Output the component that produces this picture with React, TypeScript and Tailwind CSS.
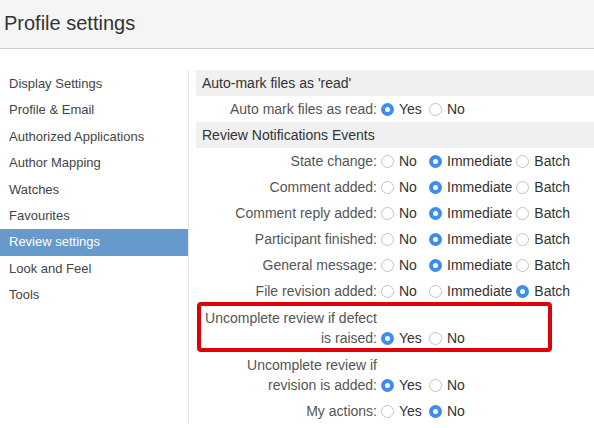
import React from "react";

const font = { fontFamily: '"Liberation Sans", Arial, Helvetica, sans-serif' };

function Radio({ checked }: { checked: boolean }) {
  return checked ? (
    <span className="flex h-[13px] w-[13px] shrink-0 items-center justify-center rounded-full bg-[#3b8eea]">
      <span className="h-[5px] w-[5px] rounded-full bg-white" />
    </span>
  ) : (
    <span className="h-[13px] w-[13px] shrink-0 rounded-full border border-[#c4c4c4] bg-white" />
  );
}

function Options({ opts, sel }: { opts: string[]; sel: number }) {
  return (
    <div className="ml-[4px] flex items-center">
      {opts.map((o, i) => (
        <span key={o} className="mr-[4px] flex min-w-[44px] items-center gap-[5px]">
          <Radio checked={i === sel} />
          <span>{o}</span>
        </span>
      ))}
    </div>
  );
}

function Row({ label, opts, sel }: { label: React.ReactNode; opts: string[]; sel: number }) {
  return (
    <div className="flex items-end py-[3px] pl-[5px] leading-[20px]">
      <div className="w-[176px] shrink-0 text-right text-[#555]">{label}</div>
      <div className="flex h-[20px] items-center">
        <Options opts={opts} sel={sel} />
      </div>
    </div>
  );
}

const NIB = ["No", "Immediate", "Batch"];
const YN = ["Yes", "No"];

export default function App() {
  const side = [
    "Display Settings",
    "Profile & Email",
    "Authorized Applications",
    "Author Mapping",
    "Watches",
    "Favourites",
    "Review settings",
    "Look and Feel",
    "Tools",
  ];
  return (
    <div className="h-[428px] w-[594px] overflow-hidden bg-white text-[#333]" style={font}>
      <div className="h-[49px] border-b border-[#cfcfcf] bg-[#f5f5f5] pl-[4px] pt-[10px] text-[20px] leading-[26px] text-[#333]">
        Profile settings
      </div>
      <div className="flex pt-[21px]">
        <div className="w-[189px] shrink-0 border-r border-[#e6e6e6] text-[13px]">
          <div className="pt-[1px]">
            {side.map((s) => (
              <div
                key={s}
                className={
                  "h-[26.4px] pl-[9px] leading-[26px] " +
                  (s === "Review settings" ? "bg-[#6699cc] text-white" : "text-[#444]")
                }
              >
                {s}
              </div>
            ))}
          </div>
        </div>
        <div className="flex-1 pl-[7px] text-[14px]">
          <div className="bg-[#f0f0f0] py-[3px] pl-[6px] leading-[20px] text-[#333]">Auto-mark files as 'read'</div>
          <Row label="Auto mark files as read:" opts={YN} sel={0} />
          <div className="bg-[#f0f0f0] py-[3px] pl-[6px] leading-[20px] text-[#333]">Review Notifications Events</div>
          <Row label="State change:" opts={NIB} sel={1} />
          <Row label="Comment added:" opts={NIB} sel={1} />
          <Row label="Comment reply added:" opts={NIB} sel={1} />
          <Row label="Participant finished:" opts={NIB} sel={1} />
          <Row label="General message:" opts={NIB} sel={1} />
          <Row label="File revision added:" opts={NIB} sel={2} />
          <div className="-mt-[2px] ml-[1px] w-[355px] rounded-[4px] border-4 border-[#e0000b]">
            <div className="flex items-end pt-[2px] leading-[20px]">
              <div className="w-[176px] shrink-0 text-right text-[#555]">Uncomplete review if defect is raised:</div>
              <div className="flex h-[20px] items-center">
                <Options opts={YN} sel={0} />
              </div>
            </div>
          </div>
          <Row label="Uncomplete review if revision is added:" opts={YN} sel={0} />
          <Row label="My actions:" opts={YN} sel={1} />
        </div>
      </div>
    </div>
  );
}
